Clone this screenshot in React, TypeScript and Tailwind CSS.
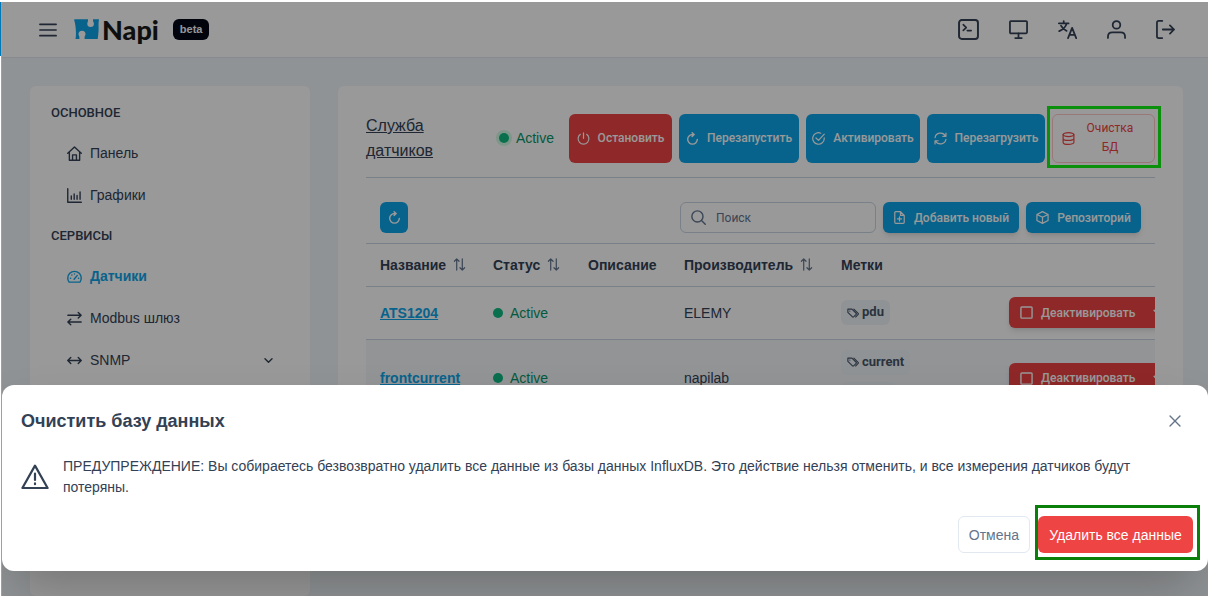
import React from 'react';

interface IconProps {
  className?: string;
  children: React.ReactNode;
}

const Icon: React.FC<IconProps> = ({ className = 'w-[14px] h-[14px]', children }) => (
  <svg
    className={`shrink-0 ${className}`}
    viewBox="0 0 14 14"
    fill="none"
    stroke="currentColor"
    strokeWidth={1.3}
    strokeLinecap="round"
    strokeLinejoin="round"
    aria-hidden="true"
  >
    {children}
  </svg>
);

const icons = {
  bars: <path d="M.7 2.600h12.600M.7 7h12.600M.7 11.400h12.600" />,
  terminal: (
    <>
      <rect x=".7" y=".7" width="12.600" height="12.600" rx="1.800" />
      <path d="M3.500 3.800l2 1.900-2 1.900M6.200 7.700h2.600" strokeWidth={1.1} />
    </>
  ),
  desktop: (
    <>
      <rect x=".7" y=".8" width="12.600" height="9" rx=".7" />
      <path d="M7 9.800v3.400M4.600 13.300h4.800" />
    </>
  ),
  language: (
    <>
      <path d="M.6 2.500h7.200M4.200.8v1.600M6.400 2.600C5.600 5.200 3.400 7.200.9 8.200M2.200 4.200c.9 1.800 2.600 3.200 4.100 3.800" />
      <path d="M7.400 13.400l3-7.600 3 7.600M8.300 11h4.200" />
    </>
  ),
  user: (
    <>
      <circle cx="7" cy="3.600" r="2.800" />
      <path d="M.7 13.200v-.8c0-2 1.400-3.200 3.200-3.200h6.200c1.800 0 3.200 1.200 3.200 3.200v.8" />
    </>
  ),
  signOut: <path d="M4.600.7H2C1.200.7.7 1.200.7 2v10c0 .8.5 1.300 1.300 1.300h2.600M5 7h8.300M10.300 4l3 3-3 3" />,
  home: <path d="M.7 6.800L7 1l6.300 5.800M2.200 5.600v7.700h9.600V5.600M5.200 13.200V8.300h3.600v4.900" />,
  chart: <path d="M.7.700v12.600h12.700M4 10.600V7.500M6.700 10.600V5.500M9.400 10.600V7M12.200 10.600V3.700" />,
  gauge: (
    <>
      <path d="M1.900 12.200C1 11 .7 9.900.7 8.500a6.300 6.300 0 0112.600 0c0 1.400-.3 2.500-1.200 3.700z" />
      <path d="M6.600 9.600L9.600 6M3.200 8.600h.2M4.500 5.600l.1.100M7 4.500v.1M10.700 8.600h.2" />
    </>
  ),
  exchange: <path d="M.8 4h12.400M10.500 1.300L13.200 4l-2.700 2.500M13.200 10.200H.8M3.500 7.600L.8 10.200l2.700 2.600" />,
  arrowsH: <path d="M.7 7h12.600M3.500 4.200L.7 7l2.800 2.800M10.500 4.200L13.300 7l-2.800 2.800" />,
  chevron: <path d="M2.500 4.800L7 9.200l4.500-4.400" strokeWidth={1.8} />,
  power: <path d="M7 .8v6M3.600 2.500a5.800 5.800 0 106.800 0" />,
  refresh: <path d="M7 2.700a5.200 5.200 0 105.200 5.200M7 2.700h1.200M6.600.700l2.200 2-2.200 2.100" strokeWidth={1.500} />,
  check: (
    <>
      <path d="M13.200 6.300V7A6.200 6.200 0 119.500 1.300" />
      <path d="M4.300 6.400L7 9l6.200-6.700" />
    </>
  ),
  sync: <path d="M1.100 6.200A6 6 0 0112.300 4.400M12.900 1.200v3.400H9.500M12.900 7.800A6 6 0 011.700 9.600M1.100 12.800V9.400h3.400" />,
  database: (
    <>
      <ellipse cx="7" cy="2.800" rx="5.800" ry="2.100" />
      <path d="M1.200 2.800v8.400c0 1.200 2.600 2.100 5.800 2.100s5.800-.9 5.800-2.100V2.800M1.200 7c0 1.200 2.600 2.100 5.800 2.100s5.800-.9 5.800-2.100" />
    </>
  ),
  search: (
    <>
      <circle cx="6" cy="6" r="5.200" />
      <path d="M9.800 9.800l3.500 3.500" />
    </>
  ),
  filePlus: <path d="M8 .7H3.200c-.8 0-1.300.5-1.300 1.300v10c0 .8.500 1.300 1.300 1.300h7.600c.8 0 1.300-.5 1.300-1.300V4.800zM8 .7v4.100h4.100M7 6.300v4.400M4.800 8.500h4.400" />,
  box: <path d="M7 .7l6 3v6.600l-6 3-6-3V3.700zM1 3.700l6 3 6-3M7 6.700v6.600" />,
  sort: <path d="M4 13V1M1.500 3.500L4 1l2.500 2.500M10 1v12M7.500 10.500L10 13l2.500-2.500" />,
  tags: (
    <>
      <path d="M1 2.500v3.700l5.400 5.400c.4.400.9.400 1.300 0l3-3c.4-.4.400-.9 0-1.300L5.700 2.500zM3.300 4.800h.1" />
      <path d="M8 2.500l5 4.900c.4.400.4.900 0 1.300l-3 3" />
    </>
  ),
  square: <rect x="1" y="1" width="12" height="12" rx="1" strokeWidth={1.500} />,
  times: <path d="M1.200 1.200l11.600 11.600M12.800 1.200L1.200 12.800" strokeWidth={1.600} />,
  warning: <path d="M7 1.300l6.300 11.200H.7zM7 5.300v3.200M7 10.200v.4" strokeWidth={1.100} />,
};

const navItems = [
  { heading: 'ОСНОВНОЕ' },
  { label: 'Панель', icon: icons.home },
  { label: 'Графики', icon: icons.chart },
  { heading: 'СЕРВИСЫ' },
  { label: 'Датчики', icon: icons.gauge, active: true },
  { label: 'Modbus шлюз', icon: icons.exchange },
  { label: 'SNMP', icon: icons.arrowsH, expandable: true },
];

const topActions = [
  { label: 'Терминал', icon: icons.terminal, size: 'w-[21px] h-[21px]' },
  { label: 'Экран', icon: icons.desktop, size: 'w-[19px] h-[19px]' },
  { label: 'Язык', icon: icons.language, size: 'w-[19px] h-[19px]' },
  { label: 'Профиль', icon: icons.user, size: 'w-[19px] h-[19px]' },
  { label: 'Выход', icon: icons.signOut, size: 'w-[19px] h-[19px]' },
];

const sensors = [
  { name: 'ATS1204', vendor: 'ELEMY', tags: ['pdu'] },
  { name: 'frontcurrent', vendor: 'napilab', tags: ['current', 'front'] },
];

const columns = [
  { title: 'Название', width: 'w-[113px]', sortable: true },
  { title: 'Статус', width: 'w-[95px]', sortable: true },
  { title: 'Описание', width: 'w-[96px]' },
  { title: 'Производитель', width: 'w-[157px]', sortable: true },
  { title: 'Метки', width: 'w-[168px]' },
  { title: '', width: 'w-[220px]' },
];

const Header = () => (
  <header className="flex h-14 shrink-0 items-center justify-between border-b border-slate-200 bg-white pr-[33px] pl-[37px]">
    <div className="flex items-center">
      <button aria-label="Меню">
        <Icon className="h-[18px] w-[18px]">{icons.bars}</Icon>
      </button>
      <a href="#" className="ml-[17px] flex items-center gap-[3px] text-[#1a1a1a]">
        <svg className="h-[21px] w-[25px]" viewBox="0 0 25 21" fill="#0ea5e9" aria-hidden="true">
          <path d="M0 .5C2-.1 4 .2 6 .2h8v1.500c0 1-.7 1.500-.7 3a3.300 3.300 0 006.600 0c0-1.500-.9-2-.9-3V.2H25c-1 5 0 9-.6 13.500-.2 2.500-.6 5.300-.6 6.300H10.600V18c0-1 .9-1.500.9-2.700a3.500 3.500 0 00-7 0c0 1.200.9 1.700.9 2.700v2H1.500C2.500 15 1.800 6 0 .5z" />
        </svg>
        <span className="font-['Lato'] text-[27px] leading-8 font-black">Napi</span>
      </a>
      <span className="ml-[14px] rounded-md bg-[#020617] px-[7px] py-[3px] text-[11px] leading-[15px] font-bold text-slate-50">beta</span>
    </div>
    <div className="flex items-center gap-[30px]">
      {topActions.map((a) => (
        <button key={a.label} aria-label={a.label}>
          <Icon className={a.size}>{a.icon}</Icon>
        </button>
      ))}
    </div>
  </header>
);

const Sidebar = () => (
  <aside className="w-[280px] shrink-0 rounded-md bg-white pt-[7px]">
    {navItems.map((item) =>
      item.heading ? (
        <div key={item.heading} className="flex h-[39px] items-center pl-[21px] font-['Roboto'] text-[13px] font-medium">
          {item.heading}
        </div>
      ) : (
        <a
          key={item.label}
          href="#"
          className={`flex h-[42px] items-center gap-2 pl-[37px] text-sm ${item.active ? 'font-bold text-[#0ea5e9]' : ''}`}
        >
          <Icon className="h-[15px] w-[15px]">{item.icon}</Icon>
          {item.label}
          {item.expandable && <Icon className="mr-9 ml-auto h-[11px] w-[11px]">{icons.chevron}</Icon>}
        </a>
      )
    )}
  </aside>
);

const toolButton = "flex items-center justify-center gap-2 rounded-md font-['Roboto'] text-xs font-medium text-white";

const ServiceBar = () => (
  <div className="flex items-center border-b border-slate-300 pb-[14px]">
    <h1 className="w-[85px] text-base leading-[25px] underline">Служба датчиков</h1>
    <div className="ml-auto flex items-center gap-[7px]">
      <div className="mr-2 flex items-center gap-[7px] text-sm text-[#059669]">
        <span className="h-[10px] w-[10px] rounded-full bg-[#10b981] ring-3 ring-[#d1fae5]"></span>
        Active
      </div>
      <button className={`${toolButton} h-[49px] w-[103px] bg-[#ef4444]`}>
        <Icon className="h-[13px] w-[13px]">{icons.power}</Icon>
        Остановить
      </button>
      <button className={`${toolButton} h-[49px] w-[120px] bg-[#0ea5e9]`}>
        <Icon className="h-[13px] w-[13px]">{icons.refresh}</Icon>
        Перезапустить
      </button>
      <button className={`${toolButton} h-[49px] w-[114px] bg-[#0ea5e9]`}>
        <Icon className="h-[13px] w-[13px]">{icons.check}</Icon>
        Активировать
      </button>
      <button className={`${toolButton} h-[49px] w-[118px] bg-[#0ea5e9]`}>
        <Icon className="h-[13px] w-[13px]">{icons.sync}</Icon>
        Перезагрузить
      </button>
      <button className="flex h-[49px] w-[103px] items-center rounded-md border border-red-200 px-[9px] font-['Roboto'] text-xs leading-[19px] text-[#ef4444]">
        <Icon className="h-[13px] w-[13px]">{icons.database}</Icon>
        <span className="flex-1 px-2">Очистка БД</span>
      </button>
    </div>
  </div>
);

const TableToolbar = () => (
  <div className="flex h-[66px] items-center border-b border-slate-300 px-[14px] pt-[14px]">
    <button aria-label="Обновить" className={`${toolButton} h-[31px] w-[28px] bg-[#0ea5e9]`}>
      <Icon className="h-[13px] w-[13px]">{icons.refresh}</Icon>
    </button>
    <div className="ml-auto flex items-center gap-[7px]">
      <label className="flex h-[31px] w-[196px] items-center gap-[10px] rounded-md border border-slate-300 px-[10px] text-slate-500">
        <Icon className="h-[15px] w-[15px]">{icons.search}</Icon>
        <input
          type="text"
          aria-label="Поиск"
          placeholder="Поиск"
          className="min-w-0 flex-1 font-['Roboto'] text-xs outline-none placeholder:text-slate-500"
        />
      </label>
      <button className={`${toolButton} h-[31px] w-[136px] bg-[#0ea5e9] shadow-md`}>
        <Icon className="h-[13px] w-[13px]">{icons.filePlus}</Icon>
        Добавить новый
      </button>
      <button className={`${toolButton} h-[31px] w-[115px] bg-[#0ea5e9] shadow-md`}>
        <Icon className="h-[13px] w-[13px]">{icons.box}</Icon>
        Репозиторий
      </button>
    </div>
  </div>
);

const SensorTable = () => (
  <div className="overflow-hidden">
    <table className="w-[849px] table-fixed border-collapse text-left text-sm">
      <thead>
        <tr className="h-[42px] border-b border-slate-300">
          {columns.map((c) => (
            <th key={c.title} className={`${c.width} px-[14px] font-bold whitespace-nowrap`}>
              <span className="flex items-center gap-[7px]">
                {c.title}
                {c.sortable && <Icon className="h-[13px] w-[13px] text-slate-500">{icons.sort}</Icon>}
              </span>
            </th>
          ))}
        </tr>
      </thead>
      <tbody>
        {sensors.map((s) => (
          <tr key={s.name} className="h-[53px] border-b border-slate-300 even:bg-[#f4f7fb]">
            <td className="px-[14px]">
              <a href="#" className="font-bold text-[#0ea5e9] underline">{s.name}</a>
            </td>
            <td className="px-[14px]">
              <span className="flex items-center gap-[7px] text-[#059669]">
                <span className="h-[10px] w-[10px] rounded-full bg-[#10b981]"></span>
                Active
              </span>
            </td>
            <td></td>
            <td className="px-[14px]">{s.vendor}</td>
            <td className="px-[14px] py-[10px]">
              <div className="flex flex-col items-start gap-[7px]">
                {s.tags.map((t) => (
                  <span key={t} className="flex h-[25px] items-center gap-[3px] rounded-md bg-slate-100 px-[6px] font-['Roboto'] text-[13px] font-bold text-[#475569]">
                    <Icon className="h-[12px] w-[12px]">{icons.tags}</Icon>
                    {t}
                  </span>
                ))}
              </div>
            </td>
            <td className="px-[14px]">
              <div className="flex h-[31px] w-[170px] rounded-md bg-[#ef4444] text-white shadow-md">
                <button className="flex items-center gap-2 pl-[11px] font-['Roboto'] text-xs font-medium">
                  <Icon className="h-[13px] w-[13px]">{icons.square}</Icon>
                  Деактивировать
                </button>
                <button aria-label="Ещё" className="ml-[17px]">
                  <Icon className="h-[13px] w-[13px]">{icons.chevron}</Icon>
                </button>
              </div>
            </td>
          </tr>
        ))}
      </tbody>
    </table>
  </div>
);

const ClearDialog = () => (
  <div
    role="dialog"
    aria-labelledby="clear-title"
    className="absolute inset-x-0 bottom-[25px] flex h-[186px] flex-col rounded-xl bg-white pr-[15px] pl-[19px] shadow-2xl"
  >
    <div className="flex h-[71px] shrink-0 items-center justify-between pr-3">
      <h2 id="clear-title" className="text-lg font-bold">Очистить базу данных</h2>
      <button aria-label="Закрыть" className="text-[#64748b]">
        <Icon className="h-[12px] w-[12px]">{icons.times}</Icon>
      </button>
    </div>
    <div className="flex items-center gap-[14px]">
      <Icon className="h-[28px] w-[28px]">{icons.warning}</Icon>
      <p className="text-sm leading-[21px]">
        ПРЕДУПРЕЖДЕНИЕ: Вы собираетесь безвозвратно удалить все данные из базы данных InfluxDB. Это действие нельзя отменить, и все измерения датчиков будут потеряны.
      </p>
    </div>
    <div className="mt-auto flex justify-end gap-2 pb-[18px] text-sm">
      <button className="h-[37px] rounded-md border border-slate-200 px-[10px] text-[#64748b]">Отмена</button>
      <button className="relative h-[37px] w-[155px] rounded-md bg-[#ef4444] font-medium text-white">
        Удалить все данные
        <span className="pointer-events-none absolute -top-[11px] -right-[7px] -bottom-[7px] -left-[3px] border-3 border-[#0a800a]"></span>
      </button>
    </div>
  </div>
);

const App: React.FC = () => {
  return (
    <div className="flex h-screen overflow-hidden border-t-2 border-white bg-white font-['Liberation_Sans',sans-serif] text-[#334155]">
      <div className="w-[2px] shrink-0 border-r border-slate-400">
        <div className="h-[54px] bg-[#0078b7]"></div>
      </div>
      <div className="relative flex min-w-0 flex-1 flex-col overflow-hidden bg-slate-100">
        <Header />
        <div className="flex min-h-0 flex-1 gap-7 pt-7 pr-[25px] pl-7">
          <Sidebar />
          <main className="min-w-0 flex-1 self-start rounded-md bg-white px-7 pt-[27px] pb-7">
            <ServiceBar />
            <TableToolbar />
            <SensorTable />
          </main>
        </div>
        <div className="absolute inset-0 bg-black/40"></div>
        <div className="pointer-events-none absolute top-[104px] right-[47px] h-[62px] w-[114px] border-3 border-[#0a900a]"></div>
        <ClearDialog />
      </div>
    </div>
  );
};

export default App;
